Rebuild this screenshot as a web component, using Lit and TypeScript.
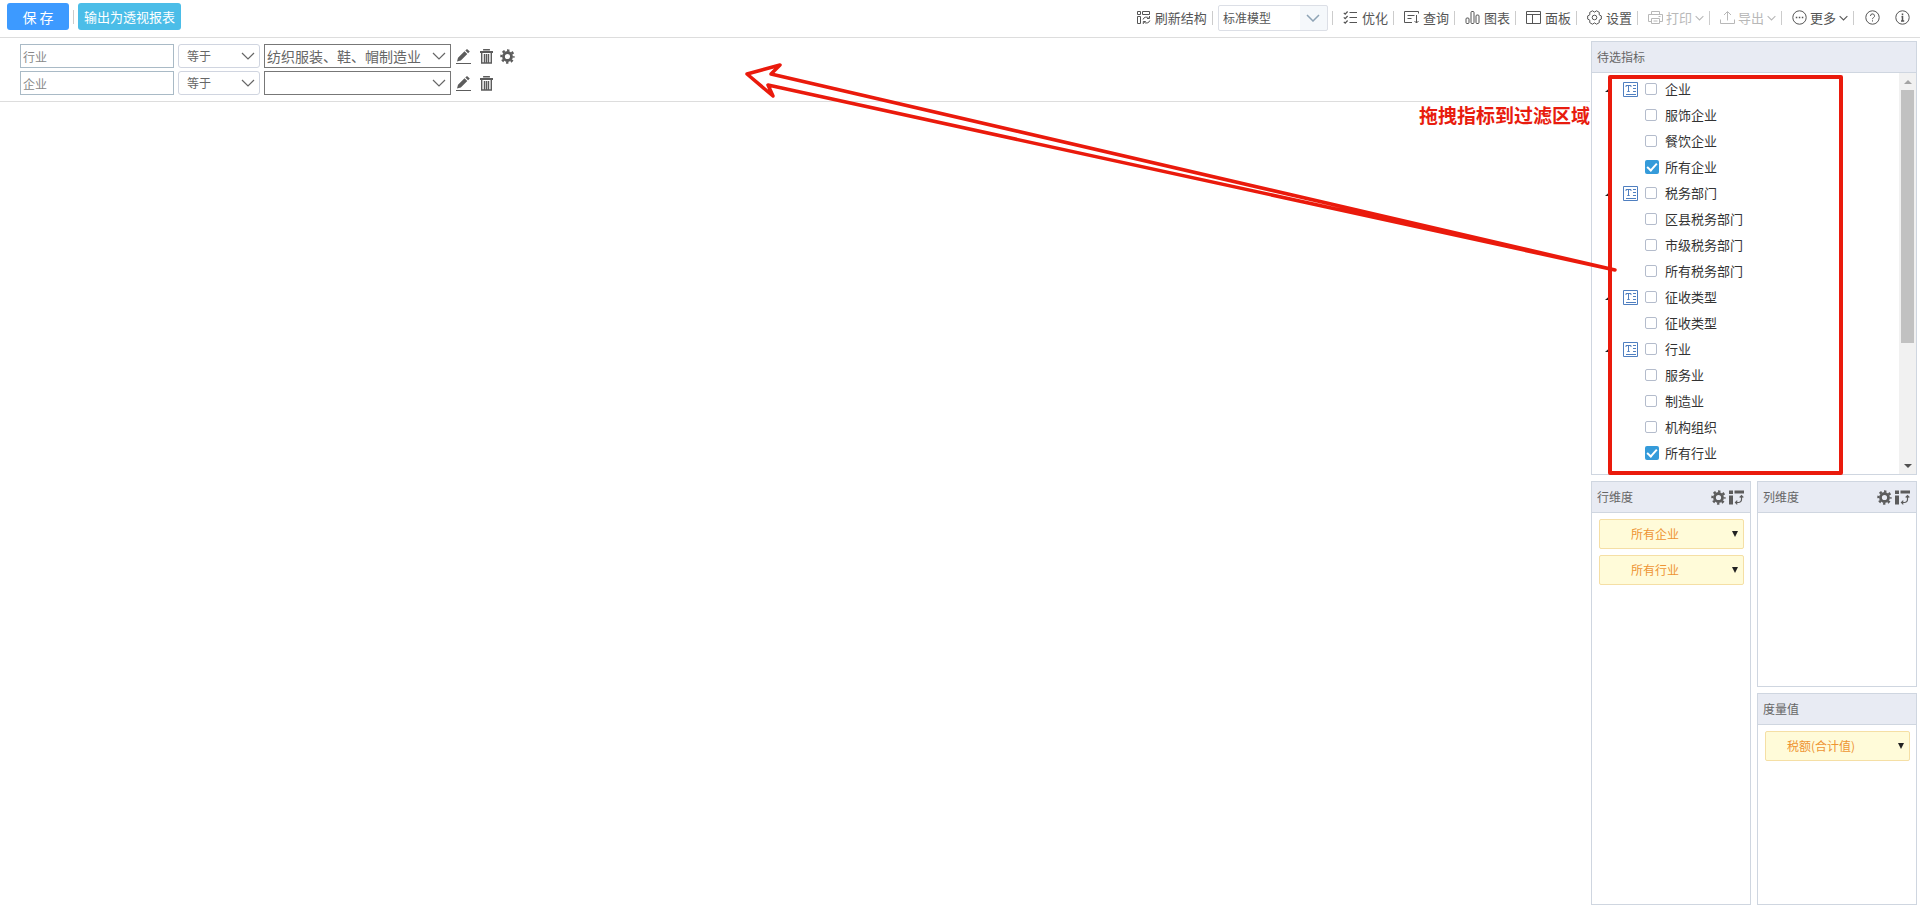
import { LitElement, html, svg, css, nothing } from "lit";
import { customElement, property } from "lit/decorators.js";

const polar = (r: number, deg: number) => {
  const a = (deg * Math.PI) / 180;
  return `${(7.5 + r * Math.cos(a)).toFixed(2)},${(7.5 + r * Math.sin(a)).toFixed(2)}`;
};
const COG = [0, 60, 120, 180, 240, 300]
  .flatMap((a) => [polar(7, a - 13), polar(7, a + 13), polar(5.4, a + 30)])
  .join(" ");

const ICONS: Record<string, unknown> = {
  refresh: svg`<path d="M1.500 1.500h3v3h-3zM6.500 1.500h7v3h-7zM1.500 6.500h3v7h-3z"/><path d="M7 9.500a3.400 3.400 0 0 1 6-1M13.500 6v2.500H11M13.800 10.500a3.400 3.400 0 0 1-6 1.200M7.300 14v-2.500h2.500"/>`,
  optimize: svg`<path d="M6.500 2.500H14M6.500 7.500H14M6.500 12.500H14M.8 2.800l1.400 1.400L4.600 1.500M.8 7.300l1.400 1.400L4.600 6M.8 11.800l1.400 1.400 2.400-2.700" stroke-width="1.200"/>`,
  query: svg`<path d="M14.500 3.500v-2H.5v11h7.500M3.500 5.500h7M3.500 8.500h4M12.500 5v8M10.500 11l2 2 2-2"/>`,
  chart: svg`<rect x="1" y="8" width="3" height="5.500" rx="1"/><rect x="6" y="1.500" width="3" height="12" rx="1"/><rect x="11" y="5" width="3" height="8.500" rx="1"/>`,
  panel: svg`<path d="M.5 1.500h14v12H.5zM.5 4.500h14M6.500 4.500v9"/>`,
  settings: svg`<polygon points=${COG} stroke-linejoin="round"/><circle cx="7.500" cy="7.500" r="2.300"/>`,
  print: svg`<path d="M3.500 4.500v-3h8v3M3.500 11.500H.5v-7h14v7h-3M3.500 8.500h8v5h-8zM5.500 11h4M10.500 6.500h2"/>`,
  export: svg`<path d="M.5 9.500v4h14v-4M7.500 10.500V2M4 5l3.500-3.500L11 5"/>`,
  more: svg`<circle cx="7.500" cy="7.500" r="6.700"/><path d="M3.800 7.500h1.500M6.800 7.500h1.500M9.800 7.500h1.500" stroke-width="1.500"/>`,
  help: svg`<circle cx="7.500" cy="7.500" r="6.700"/><path d="M5.500 6a2 2 0 1 1 3 1.600c-.8.5-1 .8-1 1.600M7.500 10.300v1.200"/>`,
  info: svg`<circle cx="7.500" cy="7.500" r="6.700"/><path d="M7.500 3.500v1.800M6.500 6.800h1v4M6 11h3.200" stroke-width="1.500"/>`,
  pencil: svg`<path d="M0 14.500h15" stroke-width="1"/><path d="M1 12.500l1-3.800 6.500-6.400 2.800 2.800-6.500 6.400zM9.300 1.500L11 0l2.800 2.600-1.700 1.700z" fill="currentColor" stroke="none"/>`,
  trash: svg`<path d="M5 1.500V.7h5v.8M1 3h13" stroke-width="1.800"/><path d="M2.700 4v10h9.600V4M5.500 5v8.500M7.500 5v8.500M9.500 5v8.500" stroke-width="1.400"/>`,
  gear: svg`<circle cx="7.500" cy="7.500" r="4" stroke-width="2.800"/><circle cx="7.500" cy="7.500" r="6.100" stroke-width="2.200" stroke-dasharray="2.400 2.391" stroke-dashoffset="1.200"/>`,
  swap: svg`<path d="M0 .5h4v3.500H0zM5.500.5H15v3H5.500zM0 5.500h4V14.500H0z" fill="currentColor" stroke="none"/><path d="M12.500 6v3.500a3 3 0 0 1-3 3H7M10.700 7.500l1.800-1.800 1.800 1.800M8.300 10.700l-1.800 1.800 1.800 1.800" stroke-width="1.200"/>`,
  field: svg`<path d="M.5.500h14v14H.5zM3 5V3.500h5V5M5.500 3.500v6M4.300 9.500h2.400M10 3.500h3M10 6.500h3M10 9.500h3M3 12.500h10"/>`,
};

const icon = (name: string, cls = "icon") =>
  html`<svg class=${cls} viewBox="0 0 15 15" aria-hidden="true">${ICONS[name]}</svg>`;
const chevron = (cls: string) =>
  html`<svg class="chevron ${cls}" viewBox="0 0 14 8" aria-hidden="true"><path d="M1 1l6 6 6-6" /></svg>`;

const shared = css`
  * { box-sizing: border-box; }
  button, input, select { font: inherit; color: inherit; margin: 0; }
  button { border: 0; padding: 0; background: none; cursor: pointer; }
  .icon, .chevron { fill: none; stroke: currentColor; flex: none; display: block; }
  .icon { width: 15px; height: 15px; }
  .chevron { width: 14px; height: 8px; }
`;

@customElement("top-bar")
class TopBar extends LitElement {
  static styles = [shared, css`
    :host { display: flex; align-items: center; justify-content: space-between; height: 38px; padding: 0 10px 8px 7px; border-bottom: 1px solid #ddd; color: #555; font-size: 13px; }
    .group, .tools { display: flex; align-items: center; }
    .tools { padding-top: 6px; }
    .group { padding-top: 4px; gap: 4px; }
    .primary { width: 62px; height: 27px; border-radius: 3px; background: #3d9aff; color: #fff; font-size: 14px; }
    .output { width: 103px; height: 27px; border-radius: 3px; background: #4bbde8; color: #fff; }
    .sep { width: 1px; height: 14px; background: #ccc; flex: none; }
    .tool { display: flex; align-items: center; gap: 4px; height: 26px; margin: 0 5px 0 10px; white-space: nowrap; }
    .tool.menu { gap: 3px; }
    .tool:disabled { color: #b8b8b8; }
    .chevron.small { width: 9px; height: 6px; stroke-width: 1.600; }
    .model { position: relative; display: flex; align-items: center; margin: 0 4px 0 5px; }
    .model select { appearance: none; width: 110px; height: 26px; padding: 0 0 0 4px; border: 1px solid #dcdfe6; border-radius: 2px; background: linear-gradient(to right, #fff 81px, #f5f8fb 81px); font-size: 12px; }
    .model .chevron { position: absolute; right: 8px; color: #8ea3b5; stroke-width: 1.500; pointer-events: none; }
    .round { margin: 0 6px 0 11px; }
    .round + .round { margin: 0 0 0 9px; }
  `];
  private tool(name: string, label: string, menu = false, disabled = false) {
    return html`<button class="tool ${menu ? "menu" : ""}" ?disabled=${disabled}>${icon(name)}<span>${label}</span>${menu ? chevron("small") : nothing}</button>`;
  }
  render() {
    const sep = html`<span class="sep"></span>`;
    return html`
      <div class="group">
        <button class="primary">保 存</button><span class="sep"></span><button class="output">输出为透视报表</button>
      </div>
      <div class="tools">
        ${this.tool("refresh", "刷新结构")}${sep}
        <div class="model"><select aria-label="模型"><option>标准模型</option></select>${chevron("")}</div>${sep}
        ${this.tool("optimize", "优化")}${sep}${this.tool("query", "查询")}${sep}
        ${this.tool("chart", "图表")}${sep}${this.tool("panel", "面板")}${sep}
        ${this.tool("settings", "设置")}${sep}${this.tool("print", "打印", true, true)}${sep}
        ${this.tool("export", "导出", true, true)}${sep}${this.tool("more", "更多", true)}${sep}
        <button class="round" aria-label="帮助">${icon("help")}</button>
        <button class="round" aria-label="信息">${icon("info")}</button>
      </div>`;
  }
}

@customElement("filter-row")
class FilterRow extends LitElement {
  @property() field = "";
  @property() value = "";
  @property({ type: Boolean }) configurable = false;
  static styles = [shared, css`
    :host { display: flex; align-items: center; height: 24px; color: #666; }
    .name { width: 154px; height: 24px; padding: 0 2px; border: 1px solid #a9bac6; font-size: 12px; color: #888; border-radius: 0; }
    .box { position: relative; display: flex; align-items: center; margin-left: 4px; }
    .box select { appearance: none; height: 24px; background: #fff; }
    .op select { width: 82px; padding: 0 0 0 8px; border: 1px solid #d0d5e0; border-radius: 3px; font-size: 12px; }
    .val select { width: 187px; padding: 0 0 0 2px; border: 1px solid #777; border-radius: 0; font-size: 14px; }
    .box .chevron { position: absolute; right: 5px; stroke-width: 1.200; pointer-events: none; }
    .actions { display: flex; gap: 8px; margin-left: 5px; color: #5c5c5c; }
    .actions button + button + button { margin-left: -2px; }
  `];
  render() {
    return html`
      <input class="name" aria-label="过滤字段" .value=${this.field} />
      <div class="box op"><select aria-label="条件"><option>等于</option></select>${chevron("")}</div>
      <div class="box val"><select aria-label="过滤值"><option>${this.value}</option></select>${chevron("")}</div>
      <div class="actions">
        <button aria-label="编辑">${icon("pencil")}</button>
        <button aria-label="删除">${icon("trash")}</button>
        ${this.configurable ? html`<button aria-label="设置">${icon("gear")}</button>` : nothing}
      </div>`;
  }
}

@customElement("side-panel")
class SidePanel extends LitElement {
  @property() heading = "";
  @property({ type: Boolean }) tools = false;
  static styles = [shared, css`
    :host { display: flex; flex-direction: column; min-height: 0; border: 1px solid #cfd6e0; background: #fff; }
    header { display: flex; align-items: center; justify-content: space-between; flex: none; height: 31px; padding: 0 6px 0 5px; border-bottom: 1px solid #cfd6e0; background: #e8ebf3; color: #666; font-size: 12px; }
    h2 { margin: 0; font-size: 12px; font-weight: 400; }
    .tools { display: flex; gap: 3px; color: #5c5c5c; }
    .body { flex: 1; min-height: 0; display: flex; flex-direction: column; }
  `];
  render() {
    return html`<header><h2>${this.heading}</h2>
      ${this.tools ? html`<div class="tools"><button aria-label="设置">${icon("gear")}</button><button aria-label="交换">${icon("swap")}</button></div>` : nothing}
      </header><div class="body"><slot></slot></div>`;
  }
}

type Node = { label: string; group?: boolean; checked?: boolean };
const NODES: Node[] = [
  { label: "企业", group: true },
  { label: "服饰企业" },
  { label: "餐饮企业" },
  { label: "所有企业", checked: true },
  { label: "税务部门", group: true },
  { label: "区县税务部门" },
  { label: "市级税务部门" },
  { label: "所有税务部门" },
  { label: "征收类型", group: true },
  { label: "征收类型" },
  { label: "行业", group: true },
  { label: "服务业" },
  { label: "制造业" },
  { label: "机构组织" },
  { label: "所有行业", checked: true },
];

@customElement("field-tree")
class FieldTree extends LitElement {
  static styles = [shared, css`
    :host { display: flex; flex: 1; min-height: 0; font-size: 13px; color: #333; }
    ul { flex: 1; list-style: none; margin: 0; padding: 3px 0 0 12px; overflow: hidden; }
    li { display: flex; align-items: center; height: 26px; }
    .twisty { width: 19px; flex: none; }
    .twisty svg { display: block; width: 8px; height: 8px; fill: #222; }
    .kind { width: 22px; flex: none; color: #4f7fc0; }
    label { display: flex; align-items: center; }
    input { appearance: none; width: 12px; height: 12px; margin-right: 8px; border: 1px solid #b4bccc; border-radius: 2px; background: #fff; }
    input:checked { width: 14px; height: 14px; margin-right: 6px; border: 0; background: #359bda; display: grid; place-items: center; }
    input:checked::before { content: ""; width: 8px; height: 4px; border: solid #fff; border-width: 0 0 2px 2px; transform: translateY(-1px) rotate(-48deg); }
    .track { display: flex; flex-direction: column; align-items: center; width: 17px; background: #f1f1f1; }
    .arrow { display: grid; place-items: center; height: 17px; width: 17px; flex: none; }
    .arrow svg { width: 8px; height: 4px; fill: #a3a3a3; }
    .arrow.down svg { fill: #505050; }
    .rail { flex: 1; width: 13px; }
    .thumb { height: 69%; background: #c1c1c1; }
  `];
  render() {
    return html`<ul>
        ${NODES.map((n) => html`<li>
          <span class="twisty">${n.group ? html`<svg viewBox="0 0 8 8"><path d="M8 1v6H1z" /></svg>` : nothing}</span>
          <span class="kind">${n.group ? icon("field") : nothing}</span>
          <label><input type="checkbox" ?checked=${n.checked} />${n.label}</label>
        </li>`)}
      </ul>
      <div class="track">
        <span class="arrow"><svg viewBox="0 0 8 4"><path d="M4 0l4 4H0z" /></svg></span>
        <div class="rail"><div class="thumb"></div></div>
        <span class="arrow down"><svg viewBox="0 0 8 4"><path d="M0 0h8L4 4z" /></svg></span>
      </div>`;
  }
}

@customElement("field-chip")
class FieldChip extends LitElement {
  static styles = [shared, css`
    :host { display: block; margin: 6px 6px 0 7px; }
    button { display: flex; align-items: center; width: 100%; height: 30px; padding-right: 5px; border: 1px solid #f5dfa5; border-radius: 2px; background: #fffbd9; color: #ee9433; font-size: 12px; }
    .text { flex: 1; padding-right: 22px; text-align: center; }
    svg { width: 6px; height: 6px; fill: #222; }
  `];
  render() {
    return html`<button><span class="text"><slot></slot></span><svg viewBox="0 0 7 7"><path d="M0 0h7L3.500 7z" /></svg></button>`;
  }
}

@customElement("app-root")
class AppRoot extends LitElement {
  static styles = [shared, css`
    :host { position: relative; display: flex; flex-direction: column; height: 100vh; overflow: hidden; background: #fff; font-family: "Noto Sans CJK SC", sans-serif; line-height: 18px; }
    .main { flex: 1; min-height: 0; display: flex; }
    .canvas { flex: 1; min-width: 0; }
    .filters { display: flex; flex-direction: column; gap: 3px; padding: 6px 20px; border-bottom: 1px solid #ddd; }
    aside { display: grid; grid-template-columns: 1fr 1fr; grid-template-rows: 434fr 206fr 212fr; gap: 6px; width: 326px; margin: 3px 3px 4px 1px; }
    .pool { grid-column: 1 / 3; }
    .rows { grid-row: 2 / 4; }
    .note { position: absolute; right: 330px; top: 102px; margin: 0; color: #e81c0e; font-size: 19px; line-height: 26px; font-weight: 700; }
    .marks { position: absolute; right: 0; top: 0; width: 1920px; height: 909px; fill: none; stroke: #ea1a0c; stroke-width: 4; stroke-linejoin: round; stroke-linecap: round; pointer-events: none; }
  `];
  render() {
    return html`
      <top-bar></top-bar>
      <div class="main">
        <main class="canvas">
          <div class="filters">
            <filter-row field="行业" value="纺织服装、鞋、帽制造业" configurable></filter-row>
            <filter-row field="企业"></filter-row>
          </div>
        </main>
        <aside>
          <side-panel class="pool" heading="待选指标"><field-tree></field-tree></side-panel>
          <side-panel class="rows" heading="行维度" tools>
            <field-chip>所有企业</field-chip>
            <field-chip>所有行业</field-chip>
          </side-panel>
          <side-panel heading="列维度" tools></side-panel>
          <side-panel heading="度量值"><field-chip>税额(合计值)</field-chip></side-panel>
        </aside>
      </div>
      <p class="note">拖拽指标到过滤区域</p>
      <svg class="marks" viewBox="0 0 1920 909" aria-hidden="true">
        <rect x="1610" y="77" width="231" height="396" />
        <path stroke-width="3.500" d="M1615 270L771 74l9-9-33 9 26 22-5-11z" />
      </svg>`;
  }
}
